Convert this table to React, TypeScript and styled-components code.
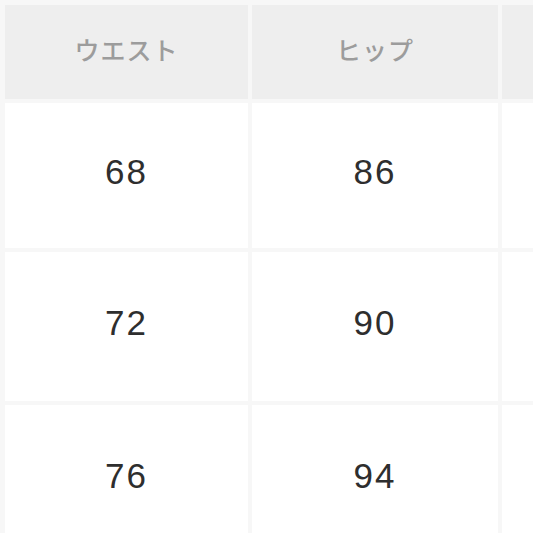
import styled, { createGlobalStyle } from "styled-components";

const GlobalStyle = createGlobalStyle`
  html, body {
    margin: 0;
    padding: 0;
    background: #f5f5f5;
    overflow: hidden;
  }
`;

const columns = ["ウエスト", "ヒップ", ""];
const rows = [
  ["68", "86", ""],
  ["72", "90", ""],
  ["76", "94", ""],
];

export default function App() {
  return (
    <>
      <GlobalStyle />
      <Page>
        <SizeTable>
          {columns.map((label, index) => (
            <HeadCell key={`h${index}`}>{label}</HeadCell>
          ))}
          {rows.map((row, rowIndex) =>
            row.map((value, colIndex) => <ValueCell key={`${rowIndex}-${colIndex}`}>{value}</ValueCell>)
          )}
        </SizeTable>
      </Page>
    </>
  );
}

const Page = styled.main`
  width: 533px;
  height: 533px;
  overflow: hidden;
  padding: 5px 0 0 5px;
  box-sizing: border-box;
  background: #f7f7f7;
`;

const SizeTable = styled.div`
  display: grid;
  grid-template-columns: 243px 246px 246px;
  grid-template-rows: 94px 145px 149px 149px;
  gap: 4px;
  font-family: "Liberation Sans", "Noto Sans CJK JP", sans-serif;
`;

const HeadCell = styled.div`
  display: flex;
  align-items: center;
  justify-content: center;
  padding-bottom: 6px;
  background: #eeeeee;
  color: #9c9c9c;
  font-family: "Noto Sans CJK JP", sans-serif;
  font-size: 25px;
  font-weight: 500;
  letter-spacing: 1px;
`;

const ValueCell = styled.div`
  display: flex;
  align-items: center;
  justify-content: center;
  padding-bottom: 7px;
  background: #ffffff;
  color: #2e2e2e;
  font-size: 35px;
  letter-spacing: 2px;
`;
